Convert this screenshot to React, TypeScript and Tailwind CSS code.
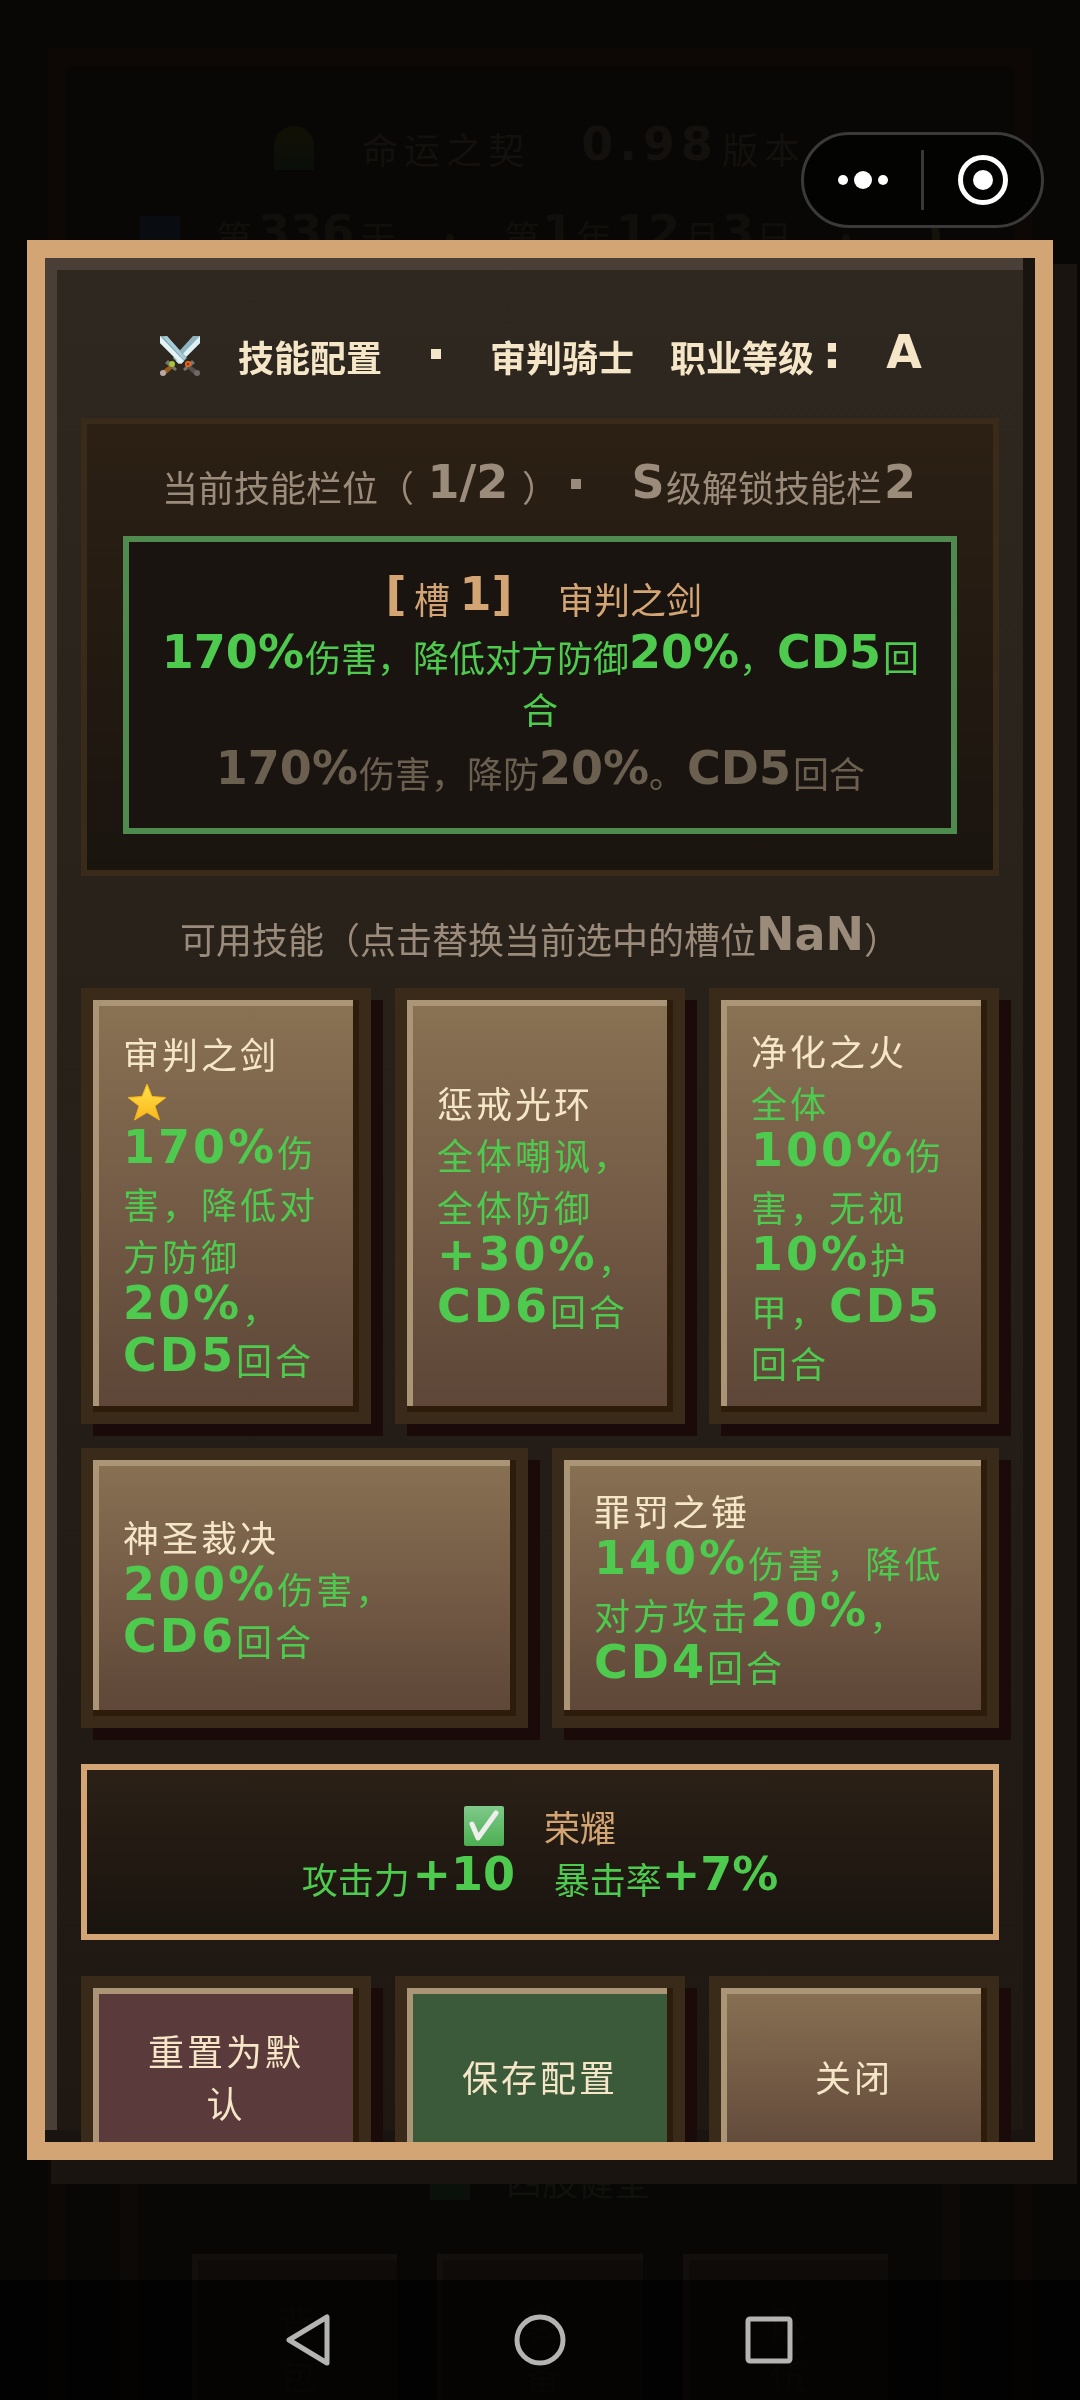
import { Fragment } from "react";

type Skill = {
  name: string;
  lines: string[];
  active?: boolean;
};

const topSkills: Skill[] = [
  {
    name: "审判之剑",
    lines: ["170%伤", "害，降低对", "方防御", "20%，", "CD5回合"],
    active: true,
  },
  { name: "惩戒光环", lines: ["全体嘲讽，", "全体防御", "+30%，", "CD6回合"] },
  {
    name: "净化之火",
    lines: ["全体", "100%伤", "害，无视", "10%护", "甲，CD5", "回合"],
  },
];

const bottomSkills: Skill[] = [
  { name: "神圣裁决", lines: ["200%伤害，", "CD6回合"] },
  { name: "罪罚之锤", lines: ["140%伤害，降低", "对方攻击20%，", "CD4回合"] },
];

const CELL = 36;

// Latin characters and digits use the heavy display face, the rest stays CJK.
// A run takes at least one full-width cell per character.
function PixelText({ text }: { text: string }) {
  return (
    <>
      {text.split(/([\x21-\x7e]+)/).map((part, i) =>
        i % 2 === 1 ? (
          <span
            key={i}
            className="inline-block text-center align-[4px] font-['DejaVu_Sans'] text-[46px] leading-0 font-bold"
            style={{ minWidth: part.length * CELL }}
          >
            {part}
          </span>
        ) : (
          <Fragment key={i}>{part}</Fragment>
        )
      )}
    </>
  );
}

function SwordsIcon() {
  return (
    <svg viewBox="0 0 40 40" className="h-10 w-11" aria-hidden="true">
      <g>
        <path d="M40 0h-7L13 22l6 6L40 7z" fill="#8fb4bf" />
        <path d="M40 0 16 25l3 3L40 7z" fill="#dff0f2" />
        <path d="M8 24l9 9-2 2-10-8z" fill="#77766f" />
        <path d="M10 29l3 3-8 7-4-3z" fill="#9a5c1d" />
        <circle cx="3" cy="37" r="3" fill="#b9aaa6" />
        <circle cx="12" cy="28" r="3" fill="#a4c639" />
      </g>
      <g>
        <path d="M0 0h7l20 22-6 6L0 7z" fill="#7fa6b3" />
        <path d="M0 0v7l21 21 3-3z" fill="#e4f3f5" />
        <path d="M3 1l21 23 2-2L7 0z" fill="#a9ccd6" />
        <path d="M32 24l-9 9 2 2 10-8z" fill="#77766f" />
        <path d="M30 29l-3 3 8 7 4-3z" fill="#56504f" />
        <circle cx="37" cy="37" r="3" fill="#6e6869" />
        <circle cx="28" cy="28" r="3" fill="#e8751a" />
        <circle cx="28" cy="28" r="1.5" fill="#b3200e" />
      </g>
    </svg>
  );
}

function StarIcon() {
  return (
    <svg viewBox="0 0 40 38" className="h-[38px] w-10" aria-hidden="true">
      <defs>
        <linearGradient id="star" x1="0" y1="0" x2="0" y2="1">
          <stop offset="0" stopColor="#fee34a" />
          <stop offset="1" stopColor="#fcb71b" />
        </linearGradient>
      </defs>
      <path
        d="M20 1l5 12.500 14 1-11 8.500 4.500 14L20 29.500 7.500 37 12 23 1 14.500l14-1z"
        fill="url(#star)"
        stroke="#f6b21a"
        strokeLinejoin="round"
      />
    </svg>
  );
}

function CheckIcon() {
  return (
    <svg viewBox="0 0 40 40" className="size-10" aria-hidden="true">
      <defs>
        <linearGradient id="check" x1="0" y1="0" x2="0" y2="1">
          <stop offset="0" stopColor="#7fc98a" />
          <stop offset="1" stopColor="#4caf50" />
        </linearGradient>
      </defs>
      <rect width="40" height="40" rx="2" fill="url(#check)" />
      <path
        d="M8 18l6 14L32 7"
        fill="none"
        stroke="#eeeeee"
        strokeWidth="5"
        strokeLinecap="round"
        strokeLinejoin="round"
      />
    </svg>
  );
}

// Square separator dot, one cell wide.
function Dot() {
  return (
    <span className="flex w-9 justify-center pb-1">
      <span className="size-[10px] bg-current" />
    </span>
  );
}

const blockShadow =
  "shadow-[12px_12px_0_#1a0a0a,inset_-6px_-6px_0_#2e1c0b,inset_6px_6px_0_#ab9577]";

function SkillCard({ skill }: { skill: Skill }) {
  return (
    <button
      type="button"
      className={`min-w-0 flex-1 border-12 border-[#3a2a1a] bg-linear-to-b from-[#8b7355] to-[#5c4437] bg-origin-border px-[30px] py-6 text-left tracking-[3px] whitespace-nowrap text-[#f5e6c8] ${blockShadow}`}
    >
      {skill.name}
      {skill.active && (
        <span className="flex h-[46px] items-center pl-1">
          <StarIcon />
        </span>
      )}
      <span className="block text-[#4ecb4e]">
        {skill.lines.map((line) => (
          <span key={line} className="block">
            <PixelText text={line} />
          </span>
        ))}
      </span>
    </button>
  );
}

function ActionButton({ label, className }: { label: string; className: string }) {
  return (
    <button
      type="button"
      className={`min-w-0 flex-1 border-12 border-[#3a2a1a] p-9 tracking-[3px] text-[#f5e6c8] ${blockShadow} ${className}`}
    >
      {label}
    </button>
  );
}

function GameBackdrop() {
  return (
    <main
      aria-hidden="true"
      className="flex h-screen flex-col overflow-hidden px-12 pt-12 text-[#13100d]"
    >
      <div className="flex min-h-0 flex-1 flex-col justify-between border-x-[18px] border-t-[18px] border-[#0d0805]">
        <div className="flex flex-col gap-9 pt-14">
          <div className="flex items-center justify-center gap-12 tracking-[6px]">
            <span className="h-11 w-10 rounded-t-full bg-linear-to-b from-[#121004] to-[#0a0f0a]" />
            <span>命运之契</span>
            <span>
              <PixelText text="0.98版本" />
            </span>
          </div>
          <div className="flex items-center justify-center gap-9 whitespace-nowrap text-[#110f0c]">
            <span className="size-10 bg-[#090d11]" />
            <span>
              <PixelText text="第336天　·　第1年12月3日" />
            </span>
            <span>·</span>
            <span className="size-10 rounded-full border-r-8 border-[#14120a]" />
          </div>
        </div>
        <div className="mx-[54px] flex flex-col gap-12 border-x-[18px] border-[#0c0906] px-[54px]">
          <div className="flex items-center justify-center gap-9 text-[#0e120c]">
            <span className="size-10 bg-[#0a100a]" />
            <span>四肢健全</span>
          </div>
          <div className="flex gap-10">
            {["背包", "装备", "队伍"].map((label) => (
              <div
                key={label}
                className="flex-1 border-t-6 border-l-6 border-[#130f0c] bg-[#0f0b08] px-16 pt-9 text-center"
              >
                {label}
              </div>
            ))}
          </div>
        </div>
      </div>
    </main>
  );
}

function CapsuleMenu() {
  return (
    <div className="fixed top-[132px] right-9 flex h-24 w-[243px] items-center rounded-full border-3 border-[#3a3a3a] bg-[#030302] text-white">
      <button type="button" aria-label="更多" className="flex flex-1 justify-center">
        <svg viewBox="0 0 50 20" className="h-5 w-[50px]" fill="currentColor">
          <circle cx="5" cy="10" r="5" />
          <circle cx="25" cy="10" r="9" />
          <circle cx="45" cy="10" r="5" />
        </svg>
      </button>
      <span className="h-[60px] w-[3px] bg-[#383838]" />
      <button type="button" aria-label="关闭小程序" className="flex flex-1 justify-center">
        <svg viewBox="0 0 50 50" className="size-[50px]">
          <circle cx="25" cy="25" r="22.500" fill="none" stroke="currentColor" strokeWidth="5" />
          <circle cx="25" cy="25" r="10" fill="currentColor" />
        </svg>
      </button>
    </div>
  );
}

function NavigationBar() {
  return (
    <nav className="fixed inset-x-0 bottom-0 flex h-30 items-center justify-center gap-[178px] bg-black/60 text-[#b4b4b3]">
      <button type="button" aria-label="返回">
        <svg viewBox="0 0 52 52" className="size-[52px]" fill="none" stroke="currentColor" strokeWidth="5" strokeLinejoin="round">
          <path d="M43 3v46L5 26z" />
        </svg>
      </button>
      <button type="button" aria-label="主屏幕">
        <svg viewBox="0 0 52 52" className="size-[52px]" fill="none" stroke="currentColor" strokeWidth="5">
          <circle cx="26" cy="26" r="23" />
        </svg>
      </button>
      <button type="button" aria-label="最近任务">
        <svg viewBox="0 0 52 52" className="size-[52px]" fill="none" stroke="currentColor" strokeWidth="5" strokeLinejoin="round">
          <rect x="4" y="5" width="42" height="42" rx="2" />
        </svg>
      </button>
    </nav>
  );
}

export default function App() {
  return (
    <div className="min-h-screen bg-[#080705] font-['Noto_Sans_CJK_SC',sans-serif] text-[36px] leading-[52px]">
      <GameBackdrop />

      <div className="fixed inset-0 flex items-center justify-center">
        <section
          role="dialog"
          aria-labelledby="skill-title"
          className="flex h-[80vh] w-[95%] flex-col gap-9 overflow-hidden border-18 border-[#d4a574] bg-linear-to-b from-[#2f2820] to-[#1e1712] px-9 pt-18 shadow-[24px_24px_0_#1a1410,inset_-12px_-12px_0_#191410,inset_12px_12px_0_#4a3f36]"
        >
          <h2
            id="skill-title"
            className="flex shrink-0 items-center justify-center gap-9 font-bold whitespace-nowrap text-[#f5e6c8]"
          >
            <SwordsIcon />
            <span>技能配置</span>
            <Dot />
            {/* the dot keeps a full-width space after it */}
            <span>审判骑士</span>
            <span>
              <PixelText text="职业等级:" />
            </span>
            <span>
              <PixelText text="A" />
            </span>
          </h2>

          <div className="shrink-0 border-6 border-[#3a2a1a] bg-linear-to-b from-[#2c2014] to-[#1a140f] p-9 text-center">
            <p className="flex items-center justify-center whitespace-nowrap text-[#9b8b7b]">
              <span>
                <PixelText text="当前技能栏位（1/2）" />
              </span>
              <Dot />
              <span>
                <PixelText text="　S级解锁技能栏2" />
              </span>
            </p>
            <button
              type="button"
              className="mt-6 block w-full border-6 border-[#4f8b4f] bg-[#1a1410] py-[30px] whitespace-nowrap"
            >
              <span className="block text-[#d4a574]">
                <PixelText text="[槽1]　审判之剑" />
              </span>
              <span className="mt-[6px] block text-[#4ecb4e]">
                <PixelText text="170%伤害，降低对方防御20%，CD5回" />
                <br />合
              </span>
              <span className="mt-3 block text-[#6b5f50]">
                <PixelText text="170%伤害，降防20%。CD5回合" />
              </span>
            </button>
          </div>

          <div className="flex shrink-0 flex-col gap-6">
            <p className="text-center whitespace-nowrap text-[#9b8b7b]">
              <PixelText text="可用技能（点击替换当前选中的槽位NaN）" />
            </p>
            <div className="flex gap-6">
              {topSkills.map((skill) => (
                <SkillCard key={skill.name} skill={skill} />
              ))}
            </div>
            <div className="flex gap-6">
              {bottomSkills.map((skill) => (
                <SkillCard key={skill.name} skill={skill} />
              ))}
            </div>
          </div>

          <div className="shrink-0 border-6 border-[#d4a574] bg-linear-to-b from-[#2a2016] to-[#1a140f] py-[30px] text-center">
            <p className="flex items-center justify-center gap-10 text-[#d4a574]">
              <CheckIcon />
              <span>荣耀</span>
            </p>
            <p className="text-[#4ecb4e]">
              <PixelText text="攻击力+10　暴击率+7%" />
            </p>
          </div>

          <div className="flex shrink-0 gap-6">
            <ActionButton label="重置为默认" className="bg-[#5a3a3a]" />
            <ActionButton label="保存配置" className="bg-[#3a5a3a]" />
            <ActionButton
              label="关闭"
              className="bg-linear-to-b from-[#8b7355] to-[#5c4437] bg-origin-border"
            />
          </div>
        </section>
      </div>

      <CapsuleMenu />
      <NavigationBar />
    </div>
  );
}
